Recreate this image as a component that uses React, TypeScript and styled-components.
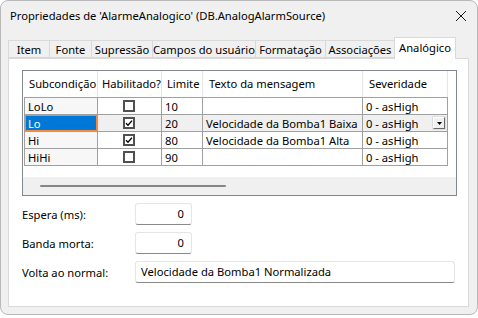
import React from "react"
import styled, { createGlobalStyle } from "styled-components"

const Global = createGlobalStyle`
  html, body {
    margin: 0;
    padding: 0;
    background: #ffffff;
  }
  body {
    font-family: "Noto Sans", "Open Sans", sans-serif;
    font-size: 11.2px;
    color: #000;
  }
`

const Window = styled.div`
  width: 478px;
  height: 315px;
  box-sizing: border-box;
  border: 1px solid #b9b9b9;
  border-radius: 8px;
  background: #f0f0f0;
  display: flex;
  flex-direction: column;
  overflow: hidden;
`

const TitleBar = styled.div`
  height: 29px;
  display: flex;
  align-items: center;
  justify-content: space-between;
  padding: 0 10px 0 9px;
`

const CloseButton = styled.div`
  width: 12px;
  height: 12px;
  display: flex;
  align-items: center;
  justify-content: center;
`

const TabArea = styled.div`
  margin: 7px 8px 0 7px;
  display: flex;
  flex-direction: column;
`

const TabStrip = styled.div`
  height: 21px;
  display: flex;
  align-items: flex-end;
  padding-left: 1px;
`

const Tab = styled.div<{ $w: number; $active?: boolean }>`
  width: ${(p) => p.$w}px;
  height: ${(p) => (p.$active ? 22 : 18)}px;
  box-sizing: border-box;
  margin-left: -1px;
  margin-bottom: ${(p) => (p.$active ? -1 : 0)}px;
  border: 1px solid #d9d9d9;
  border-bottom: ${(p) => (p.$active ? "none" : "1px solid #d9d9d9")};
  background: ${(p) => (p.$active ? "#ffffff" : "#f0f0f0")};
  display: flex;
  justify-content: center;
  align-items: ${(p) => (p.$active ? "flex-start" : "center")};
  padding-top: ${(p) => (p.$active ? 2 : 0)}px;
  white-space: nowrap;
  position: relative;
  z-index: ${(p) => (p.$active ? 1 : 0)};
`

const Panel = styled.div`
  height: 249px;
  box-sizing: border-box;
  background: #ffffff;
  border: 1px solid #d9d9d9;
  padding: 11px 0 0 13px;
`

const GridBox = styled.div`
  width: 435px;
  height: 126px;
  box-sizing: border-box;
  border: 1px solid #828790;
  background: #ffffff;
  display: flex;
  flex-direction: column;
`

const HeaderRow = styled.div`
  height: 26px;
  display: flex;
  padding-left: 1px;
`

const HeadCell = styled.div<{ $w: number; $pad?: number }>`
  width: ${(p) => p.$w}px;
  box-sizing: border-box;
  border-right: 1px solid #e5e5e5;
  padding-left: ${(p) => p.$pad ?? 6}px;
  line-height: 26px;
  white-space: nowrap;
  overflow: hidden;
`

const Body = styled.div`
  margin-left: 1px;
  width: fit-content;
  border-top: 1px solid #a0a0a0;
  border-left: 1px solid #a0a0a0;
`

const Row = styled.div`
  display: flex;
  height: 17px;
`

const Cell = styled.div<{ $w: number; $bg?: string; $center?: boolean; $selected?: boolean }>`
  width: ${(p) => p.$w}px;
  box-sizing: border-box;
  border-right: 1px solid #a0a0a0;
  border-bottom: 1px solid #a0a0a0;
  background: ${(p) => (p.$selected ? "#0078d7" : p.$bg || "#ffffff")};
  color: ${(p) => (p.$selected ? "#ffffff" : "#000")};
  box-shadow: ${(p) => (p.$selected ? "inset 0 0 0 1px #f5883a" : "none")};
  display: flex;
  align-items: center;
  justify-content: ${(p) => (p.$center ? "center" : "space-between")};
  padding: 0 2px 0 ${(p) => (p.$center ? 0 : 3)}px;
  white-space: nowrap;
  overflow: hidden;
`

const CheckBox = styled.div`
  width: 12px;
  height: 12px;
  box-sizing: border-box;
  border: 2px solid #505050;
  background: #ffffff;
  display: flex;
  align-items: center;
  justify-content: center;
`

const DropButton = styled.div`
  width: 12px;
  height: 12px;
  box-sizing: border-box;
  background: #f0f0f0;
  border-top: 1px solid #ffffff;
  border-left: 1px solid #ffffff;
  border-right: 1px solid #696969;
  border-bottom: 1px solid #696969;
  box-shadow: 0 0 0 0.5px #c8c8c8;
  display: flex;
  align-items: center;
  justify-content: center;
`

const Spacer = styled.div`
  flex: 1;
`

const ScrollArea = styled.div`
  height: 18px;
  background: #f0f0f0;
  display: flex;
  align-items: center;
`

const Thumb = styled.div`
  margin-left: 17px;
  width: 186px;
  height: 2px;
  border-radius: 1px;
  background: #868686;
`

const Form = styled.div`
  margin-top: 7px;
  display: grid;
  grid-template-columns: 113px auto;
  row-gap: 7px;
  align-items: center;
`

const Label = styled.div``

const Input = styled.div<{ $w: number; $right?: boolean }>`
  width: ${(p) => p.$w}px;
  height: 22px;
  box-sizing: border-box;
  background: #ffffff;
  border: 1px solid #e5e5e5;
  border-bottom: 1px solid #8a8a8a;
  border-radius: 3px;
  display: flex;
  align-items: center;
  justify-content: ${(p) => (p.$right ? "flex-end" : "flex-start")};
  padding: 0 ${(p) => (p.$right ? 7 : 4)}px 1px ${(p) => (p.$right ? 4 : 5)}px;
  white-space: nowrap;
`

const tabs: [string, number][] = [
  ["Item", 42],
  ["Fonte", 43],
  ["Supressão", 62],
  ["Campos do usuário", 104],
  ["Formatação", 71],
  ["Associações", 70],
]

const cols = [73, 64, 41, 160, 85]

const rows = [
  { sub: "LoLo", on: false, lim: "10", text: "", sev: "0 - asHigh" },
  { sub: "Lo", on: true, lim: "20", text: "Velocidade da Bomba1 Baixa", sev: "0 - asHigh", current: true },
  { sub: "Hi", on: true, lim: "80", text: "Velocidade da Bomba1 Alta", sev: "0 - asHigh" },
  { sub: "HiHi", on: false, lim: "90", text: "", sev: "0 - asHigh" },
]

const Check = () => (
  <svg width="8" height="8" viewBox="0 0 8 8">
    <path d="M1 4.2 L3 6.2 L7 1.6" fill="none" stroke="#000" strokeWidth="1.4" />
  </svg>
)

export default function App() {
  return (
    <>
      <Global />
      <Window>
        <TitleBar>
          <span>Propriedades de 'AlarmeAnalogico' (DB.AnalogAlarmSource)</span>
          <CloseButton>
            <svg width="12" height="12" viewBox="0 0 12 12">
              <path d="M1 1 L11 11 M11 1 L1 11" stroke="#1a1a1a" strokeWidth="1" />
            </svg>
          </CloseButton>
        </TitleBar>
        <TabArea>
          <TabStrip>
            {tabs.map(([t, w]) => (
              <Tab key={t} $w={w}>
                {t}
              </Tab>
            ))}
            <Tab $w={62} $active>
              Analógico
            </Tab>
          </TabStrip>
          <Panel>
            <GridBox>
              <HeaderRow>
                <HeadCell $w={74} $pad={5}>Subcondição</HeadCell>
                <HeadCell $w={64} $pad={4}>Habilitado?</HeadCell>
                <HeadCell $w={41} $pad={5}>Limite</HeadCell>
                <HeadCell $w={160}>Texto da mensagem</HeadCell>
                <HeadCell $w={85}>Severidade</HeadCell>
              </HeaderRow>
              <Body>
                {rows.map((r) => {
                  const bg = r.current ? "#f0f0f0" : "#ffffff"
                  return (
                    <Row key={r.sub}>
                      <Cell $w={cols[0]} $bg="#f7f7f7" $selected={r.current}>
                        {r.sub}
                      </Cell>
                      <Cell $w={cols[1]} $bg={bg} $center>
                        <CheckBox>{r.on && <Check />}</CheckBox>
                      </Cell>
                      <Cell $w={cols[2]} $bg={bg}>
                        {r.lim}
                      </Cell>
                      <Cell $w={cols[3]} $bg={bg}>
                        {r.text}
                      </Cell>
                      <Cell $w={cols[4]} $bg={bg}>
                        <span>{r.sev}</span>
                        {r.current && (
                          <DropButton>
                            <svg width="5" height="3" viewBox="0 0 5 3">
                              <path d="M0 0 H5 L2.5 3 Z" fill="#000" />
                            </svg>
                          </DropButton>
                        )}
                      </Cell>
                    </Row>
                  )
                })}
              </Body>
              <Spacer />
              <ScrollArea>
                <Thumb />
              </ScrollArea>
            </GridBox>
            <Form>
              <Label>Espera (ms):</Label>
              <Input $w={57} $right>
                0
              </Input>
              <Label>Banda morta:</Label>
              <Input $w={57} $right>
                0
              </Input>
              <Label>Volta ao normal:</Label>
              <Input $w={320}>Velocidade da Bomba1 Normalizada</Input>
            </Form>
          </Panel>
        </TabArea>
      </Window>
    </>
  )
}
